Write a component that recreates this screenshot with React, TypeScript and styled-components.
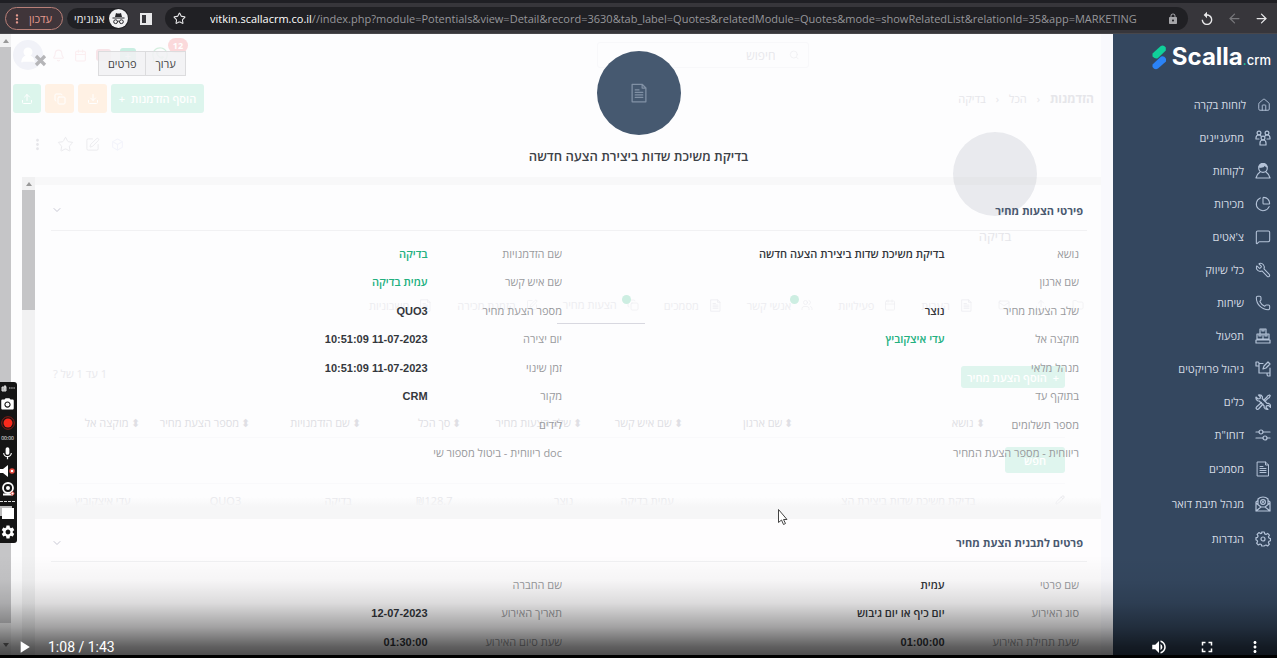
import React from "react";
import styled, { createGlobalStyle } from "styled-components";
import {
  ArrowLeft, ArrowRight, Star, House, UserRound, ChartPie, MessageSquare, Wrench, Phone,
  Bell, Search, SquarePen, Calendar, Copy, Box as BoxIcon, ChevronDown, Download, Upload, Pencil, Folder, Mail, Users,
} from "lucide-react";
import { FaWhatsapp } from "react-icons/fa";
import { MdVolumeUp, MdFullscreen, MdMoreVert, MdPlayArrow, MdPhotoCamera, MdMic, MdSettings, MdLock, MdReplay } from "react-icons/md";

const Global = createGlobalStyle`
  *, *::before, *::after { box-sizing: border-box; }
  body { margin: 0; background: #000; font-family: "Open Sans", "Liberation Sans", sans-serif; }
  button { font: inherit; border: 0; background: none; padding: 0; color: inherit; cursor: pointer; }
  h1, h2, p, dl, dd, dt, ul { margin: 0; padding: 0; list-style: none; font-weight: inherit; }
  a { color: inherit; text-decoration: none; }
`;

/* ---------- browser bar ---------- */
const Player = styled.div`
  position: relative;
  display: flex;
  flex-direction: column;
  height: 100vh;
  overflow: hidden;
`;
const BrowserBar = styled.header`
  display: flex;
  align-items: center;
  flex: none;
  height: 34px;
  padding: 3px 8px 2px 5px;
  background: #37363b;
  border-top: 3px solid #1f1f24;
  border-bottom: 1px solid #48474b;
  color: #e8e8ea;
  font-size: 11px;
`;
const UpdateButton = styled.button`
  display: flex;
  align-items: center;
  justify-content: space-between;
  width: 58px;
  height: 23px;
  padding: 0 10px 0 4px;
  border: 1px solid #b98078;
  border-radius: 12px;
  background: #40353a;
  color: #e59b8f;
`;
const Incognito = styled.div`
  display: flex;
  align-items: center;
  justify-content: space-between;
  width: 62px;
  height: 21px;
  margin-left: 4px;
  padding: 0 1px 0 7px;
  border-radius: 11px;
  background: #202024;
  white-space: nowrap;
`;
const SidePanelButton = styled.button`
  width: 12px;
  height: 12px;
  margin: 0 13px 0 11px;
  border: 2px solid #e8e8ea;
  border-right-width: 6px;
`;
const AddressBar = styled.div`
  display: flex;
  flex: 1;
  min-width: 0;
  align-items: center;
  height: 23px;
  padding: 0 9px 0 8px;
  border-radius: 12px;
  background: #202024;
  color: #97979b;
`;
const UrlText = styled.p`
  flex: 1;
  min-width: 0;
  margin-left: 24px;
  overflow: hidden;
  font-size: 11px;
  line-height: 20px;
  white-space: nowrap;
  b { font-weight: 500; color: #fff; }
`;
const NavButtons = styled.div`
  display: flex;
  gap: 12px;
  margin-left: 11px;
  button { display: flex; }
`;

/* ---------- stage ---------- */
const Stage = styled.div`
  display: flex;
  flex: 1;
  min-height: 0;
  margin-bottom: 3px;
  background: #fdfdfe;
`;
const Content = styled.main`
  position: relative;
  display: flex;
  flex: 1;
  min-width: 0;
  overflow: hidden;
  border-right: 12px solid #f9f9fd;
`;
const Scroll = styled.div<{ $w: number }>`
  display: flex;
  flex: none;
  flex-direction: column;
  align-items: center;
  width: ${(p) => p.$w}px;
  background: #f1f1f2;
`;
const ScrollArrow = styled.span<{ $down?: boolean }>`
  margin: ${(p) => (p.$down ? "20px 0 8px" : "5px 0 4px")};
  border: 3px solid transparent;
  ${(p) => (p.$down ? "border-top: 4px solid #777; border-bottom: 0" : "border-bottom: 4px solid #999; border-top: 0")};
`;
const Thumb = styled.span<{ $h?: number }>`
  width: 100%;
  background: #c5c5c7;
  ${(p) => (p.$h ? `height: ${p.$h}px` : "flex: 1")};
`;

/* ---------- dimmed page under the dialog ---------- */
const Backdrop = styled.section`
  display: flex;
  flex: 1;
  flex-direction: column;
  min-width: 0;
  padding: 8px 7px 0 2px;
  color: #e6e6ea;
  font-size: 11px;
`;
const Bar = styled.div<{ $h: number; $gap?: number; $pl?: number }>`
  display: flex;
  flex: none;
  align-items: center;
  height: ${(p) => p.$h}px;
  gap: ${(p) => p.$gap ?? 0}px;
  padding-left: ${(p) => p.$pl ?? 0}px;
`;
const Avatar = styled.span`
  display: grid;
  place-items: center;
  width: 30px;
  height: 30px;
  border-radius: 50%;
  background: #f1f2f8;
  color: #fff;
`;
const Chat = styled.span`
  position: relative;
  display: flex;
  margin-left: 6px;
  color: #d5eedf;
`;
const Count = styled.span`
  position: absolute;
  left: 17px;
  top: -8px;
  width: 20px;
  height: 15px;
  border-radius: 8px;
  background: #fbd9db;
  color: #fff;
  font-size: 9px;
  font-weight: 700;
  line-height: 15px;
  text-align: center;
`;
const FaintSearch = styled.label`
  display: flex;
  align-items: center;
  justify-content: flex-end;
  gap: 12px;
  width: 212px;
  height: 26px;
  margin: 0 285px 0 auto;
  padding: 0 8px;
  border: 1px solid #f8f8fa;
  border-radius: 3px;
  color: #f0f0f3;
  input { width: 100%; border: 0; outline: 0; background: none; font: inherit; font-size: 12px; direction: rtl; }
  input::placeholder { color: #e8e8ec; opacity: 1; }
`;
const Chip = styled.button<{ $c: string; $w: number; $h?: number }>`
  display: flex;
  flex: none;
  align-items: center;
  justify-content: center;
  gap: 6px;
  width: ${(p) => p.$w}px;
  height: ${(p) => p.$h ?? 29}px;
  border-radius: 3px;
  background: ${(p) => p.$c};
  color: #fff;
  font-size: 11px;
  font-weight: 600;
  white-space: nowrap;
`;
const Crumbs = styled.nav`
  display: flex;
  align-items: center;
  gap: 10px;
  margin-left: auto;
  direction: rtl;
  b { font-size: 12px; }
`;
const Person = styled.div`
  display: flex;
  flex: none;
  flex-direction: column;
  align-items: center;
  align-self: flex-end;
  width: 84px;
  margin-right: 57px;
  margin-top: -28px;
  font-size: 13px;
  line-height: 16px;
  p { margin-top: 12px; }
`;
const Disc = styled.span<{ $c: string }>`
  display: grid;
  place-items: center;
  width: 84px;
  height: 84px;
  border-radius: 50%;
  background: ${(p) => p.$c};
  color: #8191a5;
`;
const Tabs = styled.nav`
  display: flex;
  flex: none;
  gap: 25px;
  height: 38px;
  margin-top: 42px;
  padding-right: 10px;
  direction: rtl;
  color: #ededf1;
  a { position: relative; display: flex; align-items: center; gap: 10px; height: 38px; white-space: nowrap; }
  a[aria-current] { margin: 0 -6px; padding: 0 6px; border-bottom: 1px solid #d8d8e0; }
  i { position: absolute; right: 14px; top: 9px; width: 9px; height: 9px; border-radius: 50%; background: #cdeee2; }
`;
const ListBar = styled.div`
  display: flex;
  flex: none;
  justify-content: space-between;
  height: 22px;
  margin: 42px 29px 0 40px;
  color: #e9e9ed;
`;
const FaintTable = styled.table`
  width: calc(100% - 75px);
  margin: 21px 29px 0 46px;
  border-collapse: collapse;
  direction: rtl;
  table-layout: fixed;
  white-space: nowrap;
  th, td { padding: 0; text-align: right; font-weight: 400; }
  th { width: 11%; height: 28px; color: #dfdfe4; }
  th:nth-child(1) { width: 8%; }
  th:nth-child(2) { width: 19%; }
  th:nth-child(4), th:nth-child(6) { width: 10%; }
  th:nth-child(5) { width: 12%; }
  th:nth-child(9) { width: 8%; }
  tr { border-bottom: 1px solid #f9f9fb; }
  tbody tr:first-child { height: 46px; }
  tbody tr:last-child { height: 34px; border: 0; }
  tbody td { padding-right: 9px; }
  tbody td:first-child { padding-right: 0; }
`;
const Sort = styled.span`
  margin-left: 2px;
  font-size: 11px;
`;

/* ---------- dialog ---------- */
const Dialog = styled.section`
  position: absolute;
  inset: 0 0 0 22px;
  display: flex;
  flex-direction: column;
`;
const DialogHead = styled.header`
  position: relative;
  display: flex;
  flex: none;
  flex-direction: column;
  align-items: center;
  height: 143px;
  padding: 17px 0 0 150px;
  margin-left: 13px;
  margin-right: 9px;
  h1 { margin-top: 12px; color: #3d4248; font-size: 13px; font-weight: 600; line-height: 18px; direction: rtl; }
`;
const Close = styled.button`
  position: absolute;
  left: -1px;
  top: 20px;
  display: flex;
`;
const HeadActions = styled.div`
  position: absolute;
  left: 63px;
  top: 17px;
  display: flex;
  button {
    height: 25px;
    padding: 0 9px;
    border: 1px solid #dcdcde;
    background: #f1f1f3dd;
    color: #444;
    font-size: 11px;
  }
  button + button { border-left: 0; }
`;
const DialogBody = styled.div`
  display: flex;
  flex: 1;
  min-height: 0;
`;
const Sections = styled.div`
  flex: 1;
  min-width: 0;
  overflow: hidden;
  border-top: 8px solid #a0a0a80e;
`;
const Band = styled.div`
  height: 22px;
  background: linear-gradient(#f4f4f500, #f6f6f7 45%);
`;
const Section = styled.section<{ $last?: boolean }>`
  height: ${(p) => (p.$last ? "auto" : "312px")};
  ${(p) => p.$last && "background: #fefdfe;"}
  direction: rtl;
`;
const SectionHead = styled.header<{ $h: number }>`
  display: flex;
  align-items: center;
  justify-content: space-between;
  height: ${(p) => p.$h}px;
  margin: 0 14px 0 16px;
  padding: 5px 4px 0 0;
  border-bottom: 1px solid #f1f1f3;
  color: #4a5970;
  h2 { font-size: 11px; font-weight: 700; }
`;
const Fields = styled.dl`
  display: grid;
  grid-template-columns: 13fr 37fr 13fr 37fr;
  margin: 9px 22px 0 10px;
  color: #999a9d;
  font-size: 11px;
  line-height: 28px;
  dt, dd { height: 28px; overflow: hidden; white-space: nowrap; }
  dt:nth-of-type(4n + 3), dt:nth-of-type(4n), dt:nth-of-type(4n + 3) + dd, dt:nth-of-type(4n) + dd { height: 29px; }
`;
const Value = styled.dd<{ $link?: boolean }>`
  color: ${(p) => (p.$link ? "#22b07e" : "#34373c")};
  font-weight: 600;
`;
const Latin = styled.span`
  font-family: "Liberation Sans", Arial, sans-serif;
`;

/* ---------- sidebar ---------- */
const Sidebar = styled.aside`
  flex: none;
  width: 164px;
  padding: 10px 6px 0 0;
  background: #34475f;
  color: #d5dbe4;
`;
const Brand = styled.div`
  display: flex;
  align-items: baseline;
  justify-content: flex-end;
  height: 26px;
  color: #fff;
  font: 700 24px/26px Inter, sans-serif;
  svg { align-self: center; margin-right: 5px; }
  small { font-size: 13px; font-weight: 500; }
  i { color: #14d39a; font-style: normal; }
`;
const Menu = styled.ul`
  margin-top: 18px;
  direction: rtl;
  li { height: 33px; }
  li:nth-last-child(-n + 3) { height: 35px; }
  a { display: flex; align-items: center; gap: 11px; height: 100%; font-size: 11px; font-weight: 500; }
  svg { flex: none; color: #b4c3d8; }
`;
const FlippedWrench = styled(Wrench)`
  transform: scaleX(-1);
`;

/* ---------- video overlay ---------- */
const Shade = styled.div`
  position: absolute;
  inset: auto 0 3px;
  height: 100px;
  background: linear-gradient(#0000, #00000008 25%, #00000022 48%, #0000005c 72%, #000000a0 92%, #000000b0);
  pointer-events: none;
`;
const Controls = styled.div`
  position: absolute;
  inset: auto 0 0;
  display: flex;
  align-items: center;
  height: 23px;
  padding: 0 13px 0 14px;
  color: #fff;
  font: 14px Roboto, sans-serif;
  button { display: flex; }
  time { margin-left: 14px; }
`;
const Right = styled.div`
  display: flex;
  gap: 30px;
  margin-left: auto;
`;
const Recorder = styled.aside`
  position: absolute;
  left: 0;
  top: 382px;
  display: flex;
  flex-direction: column;
  align-items: center;
  justify-content: space-between;
  width: 17px;
  height: 161px;
  padding: 3px 2px 3px 0;
  border-radius: 0 3px 3px 0;
  background: #151515;
  color: #fff;
  font-size: 5px;
  line-height: 6px;
  svg { display: block; flex: none; }
  hr { width: 15px; margin: 0; border: 0; border-top: 1px dashed #ddd; }
`;
const Pointer = styled.svg`
  position: absolute;
  left: 777px;
  top: 508px;
`;

const stroke = { fill: "none", stroke: "currentColor", strokeWidth: 1.2, strokeLinecap: "round" as const, strokeLinejoin: "round" as const };
const Svg = ({ children, s = 16 }: { children: React.ReactNode; s?: number }) => (
  <svg width={s} height={s} viewBox="0 0 16 16" {...stroke}>{children}</svg>
);
const People = () => (
  <Svg>
    <circle cx="4" cy="3" r="1.900" /><circle cx="12" cy="3" r="1.900" /><circle cx="8" cy="8" r="1.900" />
    <path d="M1 9V8q0-3 3-3 1 0 2 1M15 9V8q0-3-3-3-1 0-2 1M1 9h3M12 9h3M5 15v-2q0-3 3-3t3 3v2z" />
  </Svg>
);
const Client = () => (
  <Svg>
    <circle cx="8" cy="5" r="4.300" /><path d="M4 4q4 1 6-2 1 2 2 2Q11 .5 8 .7 5 .5 4 4z" fill="currentColor" />
    <path d="M5 9q-3 2-4 6h14q-1-4-4-6" />
  </Svg>
);
const Boxes = () => (
  <Svg><path d="M5 1h6v5H5zM2 6h6v5H2zM8 6h6v5H8zM1 12h14v3H1zM7 1v2h2V1M4 6v2h2V6M10 6v2h2V6" /></Svg>
);
const Project = () => (
  <Svg>
    <path d="M8 2.500H4V12h8M4 5H1V1h2q1 0 1 1.500M12 12h3v3h-2q-1 0-1-3M15 12V7M8 8l1-3 4-4 2 2-4 4z" />
  </Svg>
);
const Tools = () => (
  <Svg>
    <path d="M1 3l2 2 2-.500L5.500 3l-2-2q3-.500 4 2l-.3 1.500 5 5 1.300-.200q2.500 1 2 4l-2-2-2 .500-.500 1.500 2 2q-3 .500-4-2l.200-1.300-5-5L3 7Q.5 6 1 3z" />
    <path d="M9 6l3-3 .5-1L14.500 1l.7.7-1 2-1 .5-3 3M6.500 8.500l-5 4.500q-.8 1 0 2 1 .800 2 0L8 10" />
  </Svg>
);
const Sliders = () => (
  <Svg><path d="M1 5h3M8 5h7M1 11h7M12 11h3" /><circle cx="6" cy="5" r="2" /><circle cx="10" cy="11" r="2" /></Svg>
);
const Doc = ({ s = 16 }: { s?: number }) => (
  <Svg s={s}><path d="M2.500 1h8l3 3v11h-11zM10.500 1v3h3M5 5.500h3M5 7.500h6M5 9.500h6M5 11.500h6" strokeWidth="1" /></Svg>
);
const MailOpen = () => (
  <Svg>
    <path d="M1 6v9h14V6M1 6l2-1.500M15 6l-2-1.500M3 8V3q2-2 5-2t5 2v5M1 7l5 4h4l5-4M1 15l5-4M15 15l-5-4" />
    <circle cx="8" cy="6" r="2.400" /><circle cx="8" cy="6" r="0.500" />
  </Svg>
);
const Cog = () => (
  <Svg>
    <path d="M6.700 1h2.600l.4 1.900 1.300.5 1.600-1 1.800 1.800-1 1.600.6 1.300 1.500.4v2.300l-1.600.5-.5 1.300 1 1.600-1.800 1.800-1.600-1-1.300.5L9.300 15H6.700l-.4-1.500-1.300-.5-1.600 1-1.800-1.800 1-1.600-.5-1.300L1 9V6.700l1.500-.4.6-1.300-1-1.600 1.800-1.800 1.600 1 1.300-.5z" />
    <circle cx="8" cy="8" r="2" />
  </Svg>
);
const Hat = () => (
  <svg width="19" height="19" viewBox="0 0 19 19">
    <circle cx="9.500" cy="9.500" r="9.500" fill="#f2f2f4" />
    <path d="M6 8l1-4q2.500 1 5 0l1 4zM3.500 8.500h12v1h-12z" fill="#26262a" />
    <g fill="none" stroke="#26262a"><circle cx="6.600" cy="12.700" r="1.900" /><circle cx="12.400" cy="12.700" r="1.900" /><path d="M8.500 12.500q1-.7 2 0" /></g>
  </svg>
);
const LogoMark = () => (
  <svg width="15" height="25" viewBox="0 0 15 25">
    <path d="M.5 8.500L8.500 1.200Q11.500-.5 13.800 2.500v3L6 13Q3.500 14.500.5 11.500z" fill="#10cf9a" />
    <path d="M.5 19.500L9 11.500Q12 10.500 14 13.500v3L6 23.500Q3 25.500.5 22z" fill="#2b83f6" />
  </svg>
);

const i = { size: 16, strokeWidth: 1.6 };
const menu: [string, React.ReactNode][] = [
  ["לוחות בקרה", <House {...i} size={14} />], ["מתעניינים", <People />], ["לקוחות", <Client />],
  ["מכירות", <ChartPie {...i} />], ["צ'אטים", <MessageSquare {...i} />], ["כלי שיווק", <FlippedWrench {...i} />],
  ["שיחות", <Phone {...i} />], ["תפעול", <Boxes />], ["ניהול פרויקטים", <Project />], ["כלים", <Tools />],
  ["דוחו\"ת", <Sliders />], ["מסמכים", <Doc />], ["מנהל תיבת דואר", <MailOpen />], ["הגדרות", <Cog />],
];

const t = { size: 12, strokeWidth: 1.5 };
const tabs: [string, React.ReactNode, boolean?][] = [
  ["", <Folder {...t} />], ["", <Upload {...t} />], ["", <Mail {...t} />],
  ["הערות", <Doc s={13} />], ["פעילויות", <Calendar {...t} />], ["אנשי קשר", <Users {...t} />, true],
  ["מסמכים", <Doc s={13} />], ["הצעות מחיר", <Copy {...t} />, true], ["הזמנת מכירה", <SquarePen {...t} />], ["חשבוניות", <Doc s={13} />],
];
const columns = ["נושא", "שם ארגון", "שם איש קשר", "שלב הצעות מחיר", "סך הכל", "שם הזדמנויות", "מספר הצעת מחיר", "מוקצה אל"];
const record = ["בדיקת משיכת שדות ביצירת הצ", "", "עמית בדיקה", "נוצר", "₪128.7", "בדיקה", "QUO3", "עדי איצקוביץ"];

type Field = [string, string?, boolean?];
const quote: Field[] = [
  ["נושא", "בדיקת משיכת שדות ביצירת הצעה חדשה"], ["שם הזדמנויות", "בדיקה", true],
  ["שם ארגון"], ["שם איש קשר", "עמית בדיקה", true],
  ["שלב הצעות מחיר", "נוצר"], ["מספר הצעת מחיר", "QUO3"],
  ["מוקצה אל", "עדי איצקוביץ", true], ["יום יצירה", "11-07-2023 10:51:09"],
  ["מנהל מלאי"], ["זמן שינוי", "11-07-2023 10:51:09"],
  ["בתוקף עד"], ["מקור", "CRM"],
  ["מספר תשלומים"], ["לידים"],
  ["ריווחית - מספר הצעת המחיר"], ["doc ריווחית - ביטול מספור שי"],
];
const template: Field[] = [
  ["שם פרטי", "עמית"], ["שם החברה"],
  ["סוג האירוע", "יום כיף או יום גיבוש"], ["תאריך האירוע", "12-07-2023"],
  ["שעת תחילת האירוע", "01:00:00"], ["שעת סיום האירוע", "01:30:00"],
];
const FieldList = ({ rows }: { rows: Field[] }) => (
  <Fields>
    {rows.map(([label, value, link]) => (
      <React.Fragment key={label}>
        <dt>{label}</dt>
        <Value $link={link}>{value && /^[\w]/.test(value) ? <Latin>{value}</Latin> : value}</Value>
      </React.Fragment>
    ))}
  </Fields>
);

export default function App() {
  return (
    <Player>
      <Global />
      <BrowserBar>
        <UpdateButton><MdMoreVert size={14} />עדכון</UpdateButton>
        <Incognito>אנונימי<Hat /></Incognito>
        <SidePanelButton aria-label="Side panel" />
        <AddressBar>
          <Star size={13} color="#e8e8ea" />
          <UrlText><b>vitkin.scallacrm.co.il</b>//index.php?module=Potentials&amp;view=Detail&amp;record=3630&amp;tab_label=Quotes&amp;relatedModule=Quotes&amp;mode=showRelatedList&amp;relationId=35&amp;app=MARKETING</UrlText>
          <MdLock size={12} color="#a5a5a9" />
        </AddressBar>
        <NavButtons>
          <button aria-label="Reload"><MdReplay size={16} /></button>
          <button aria-label="Forward"><ArrowLeft size={15} color="#77777b" /></button>
          <button aria-label="Back"><ArrowRight size={15} /></button>
        </NavButtons>
      </BrowserBar>

      <Stage>
        <Content>
          <Scroll $w={11}><ScrollArrow /><Thumb /><ScrollArrow $down /></Scroll>
          <Backdrop>
            <Bar $h={26} $gap={9}>
              <Avatar><UserRound size={18} fill="#fff" /></Avatar>
              <Bell size={13} color="#f9eef1" /><Calendar size={13} color="#fbeef0" />
              <Chip $c="#f8e4e8" $w={15} $h={12} aria-label="Menu" /><Chip $c="#c9eee2" $w={16} $h={14}>+</Chip>
              <Chat><FaWhatsapp size={18} /><Count>12</Count></Chat>
              <FaintSearch><input aria-label="חיפוש" placeholder="חיפוש" /><Search size={12} /></FaintSearch>
            </Bar>
            <Bar $h={61} $gap={4}>
              <Chip $c="#dcf5ec" $w={28} aria-label="Upload"><Upload size={12} /></Chip>
              <Chip $c="#fff1e4" $w={29} aria-label="Copy"><Copy size={12} /></Chip>
              <Chip $c="#fff1e4" $w={29} aria-label="Download"><Download size={12} /></Chip>
              <Chip $c="#ddf5ed" $w={93}><span>+</span><span>הוסף הזדמנות</span></Chip>
              <Crumbs><b>הזדמנות</b><span>‹</span><span>הכל</span><span>‹</span><span>בדיקה</span></Crumbs>
            </Bar>
            <Bar $h={31} $gap={11} $pl={16}><MdMoreVert size={17} /><Star size={17} strokeWidth={1.2} /><SquarePen size={15} strokeWidth={1.2} /><BoxIcon size={13} color="#f3f4fb" /></Bar>
            <Person><Disc $c="#e9eaee" /><p>בדיקה</p></Person>
            <Tabs>
              {tabs.map(([name, icon, badge], n) => (
                <a key={n} href={`#tab${n}`} aria-label={name || "Tab"} aria-current={name === "הצעות מחיר" ? "page" : undefined}>
                  {icon}{badge && <i />}{name && <span>{name}</span>}
                </a>
              ))}
            </Tabs>
            <ListBar>
              <span dir="rtl">1 עד 1 של ?</span>
              <Chip $c="#dff5ee" $w={104} $h={22}><span>הוסף הצעת מחיר</span><span>+</span></Chip>
            </ListBar>
            <FaintTable>
              <thead><tr><th />{columns.map((c) => <th key={c}><Sort>⬍</Sort>{c}</th>)}</tr></thead>
              <tbody>
                <tr><td colSpan={9}><Chip $c="#dff5ee" $w={60} $h={26}>חפש</Chip></td></tr>
                <tr><td><Pencil size={10} /></td>{record.map((r, n) => <td key={n}>{r}</td>)}</tr>
              </tbody>
            </FaintTable>
          </Backdrop>

          <Dialog>
            <DialogHead>
              <Close aria-label="Close"><svg width="13" height="13" viewBox="0 0 13 13"><path d="M2 2l9 9M11 2l-9 9" stroke="#b5b5b8" strokeWidth="3.200" /></svg></Close>
              <HeadActions><button>פרטים</button><button>ערוך</button></HeadActions>
              <Disc $c="#465970"><Doc s={20} /></Disc>
              <h1>בדיקת משיכת שדות ביצירת הצעה חדשה</h1>
            </DialogHead>
            <DialogBody>
              <Scroll $w={13}><ScrollArrow /><Thumb $h={120} /></Scroll>
              <Sections>
                <Section>
                  <SectionHead $h={46}><h2>פירטי הצעות מחיר</h2><ChevronDown size={12} color="#c8c8d4" /></SectionHead>
                  <FieldList rows={quote} />
                </Section>
                <Band />
                <Section $last>
                  <SectionHead $h={43}><h2>פרטים לתבנית הצעת מחיר</h2><ChevronDown size={12} color="#c8c8d4" /></SectionHead>
                  <FieldList rows={template} />
                </Section>
              </Sections>
            </DialogBody>
          </Dialog>
        </Content>
        <Sidebar>
          <Brand><LogoMark />Scalla<small><i>.</i>crm</small></Brand>
          <Menu>{menu.map(([name, icon]) => <li key={name}><a href="#menu">{icon}{name}</a></li>)}</Menu>
        </Sidebar>
      </Stage>

      <Recorder>
        <svg width="15" height="7" viewBox="0 0 15 7"><path d="M2 2h4v4H2zM4 1l2 0-2 4" fill="#aaa" stroke="#ddd" /><path d="M9 3h6" stroke="#ccc" strokeDasharray="1.500 .700" /></svg>
        <MdPhotoCamera size={15} />
        <svg width="14" height="14" viewBox="0 0 14 14"><circle cx="7" cy="7" r="6.300" fill="none" stroke="#8e1c15" /><circle cx="7" cy="7" r="4.500" fill="#fb2a1c" /></svg>
        <span>00:00</span>
        <MdMic size={15} />
        <svg width="15" height="12" viewBox="0 0 15 12"><path d="M0 4h3l5-4v12l-5-4H0z" fill="#fff" /><circle cx="12" cy="6" r="2" fill="#fff" stroke="#e5483d" strokeWidth="1.500" /></svg>
        <svg width="14" height="14" viewBox="0 0 14 14"><circle cx="7" cy="6" r="5" fill="none" stroke="#fff" strokeWidth="1.800" /><circle cx="7" cy="6" r="2" fill="#fff" /><path d="M2 12.500h10" stroke="#fff" strokeWidth="2" /><circle cx="11.500" cy="11.500" r="1.500" fill="#fff" stroke="#e5483d" /></svg>
        <hr />
        <svg width="15" height="13" viewBox="0 0 15 13"><path d="M0 0h12v10H0z" fill="#bbb" /><path d="M2 2h12v11H2z" fill="#fff" /></svg>
        <MdSettings size={16} />
      </Recorder>
      <Pointer width="11" height="18" viewBox="0 0 11 18">
        <path d="M1.500 1.500v13l3-2.500 2 4.500 2-1-2-4h3.500z" fill="#fff" stroke="#444" />
      </Pointer>
      <Shade />
      <Controls>
        <button aria-label="Play"><MdPlayArrow size={20} /></button>
        <time>1:08 / 1:43</time>
        <Right>
          <button aria-label="Volume"><MdVolumeUp size={18} /></button>
          <button aria-label="Full screen"><MdFullscreen size={18} /></button>
          <button aria-label="More"><MdMoreVert size={18} /></button>
        </Right>
      </Controls>
    </Player>
  );
}
